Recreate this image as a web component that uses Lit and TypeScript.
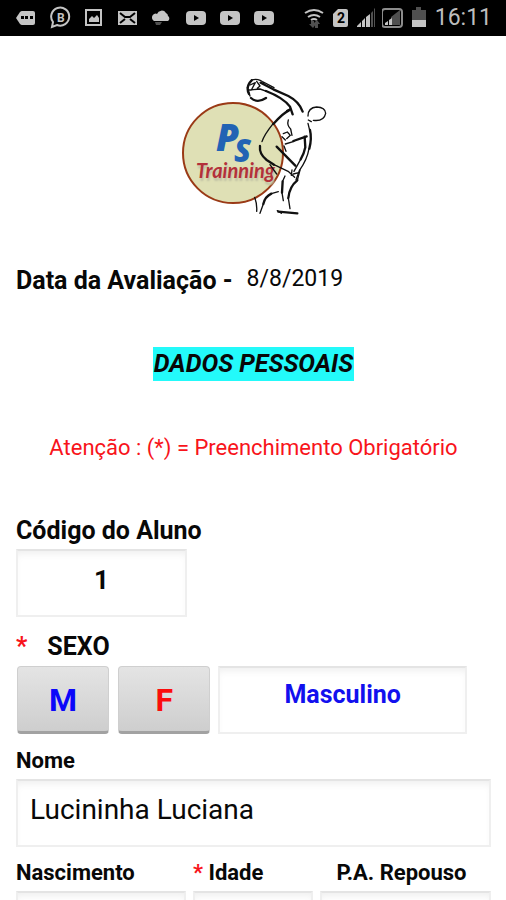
import { LitElement, html, css, svg } from "lit";
import { customElement, state } from "lit/decorators.js";

@customElement("status-bar")
class StatusBar extends LitElement {
  static styles = css`
    :host {
      display: flex;
      flex: none;
      align-items: center;
      justify-content: space-between;
      height: 36px;
      padding: 0 14px 0 16px;
      background: #000;
      color: #bdbdbd;
      font: 23px/36px Roboto, sans-serif;
    }
    .group {
      display: flex;
      align-items: center;
      gap: 12px;
    }
    .tight {
      gap: 4px;
    }
    svg {
      display: block;
      width: 22px;
      height: 24px;
      fill: #c4c4c4;
    }
    .clock {
      margin-left: 1px;
      line-height: 38px;
    }
    .line {
      fill: none;
      stroke: #c4c4c4;
      stroke-width: 2;
    }
    .frame {
      fill: none;
      stroke: #8c8c8c;
      stroke-width: 2;
    }
    .dark {
      fill: #000;
    }
    .cut {
      fill: none;
      stroke: #000;
      stroke-width: 2;
    }
    .dim {
      fill: #505050;
    }
    .num {
      font: bold 14px Roboto, sans-serif;
    }
    .small {
      font: bold 12px Roboto, sans-serif;
    }
  `;

  private icon(body: unknown) {
    return html`<svg viewBox="0 0 22 24" aria-hidden="true">${body}</svg>`;
  }

  render() {
    const video = svg`<rect x="0" y="5" width="20" height="14" rx="4"/><path class="dark" d="M8 9l5 3-5 3z"/>`;
    return html`
      <div class="group">
        ${this.icon(svg`<path d="M0 12l4-6q1-1 2-1h11q2 0 2 2v10q0 2-2 2H6q-1 0-2-1z"/><path class="dark" d="M5 10h3v3H5zM9 10h3v3H9zM14 10h3v3h-3z"/>`)}
        ${this.icon(svg`<path class="line" d="M2 21l1-5a9 9 0 1 1 4 3z"/><text class="small" x="7" y="16">B</text>`)}
        ${this.icon(svg`<rect class="line" x="2" y="4" width="15" height="15"/><path d="M5 16v-3l3-3 2 2 3-3 2 3v4z"/>`)}
        ${this.icon(svg`<rect x="0" y="5" width="19" height="14"/><path class="cut" d="M2 7l5 4h5l5-4M2 17l5-4M17 17l-5-4"/>`)}
        ${this.icon(svg`<path d="M2 15a4 4 0 0 1 0-7q2-1 3 0a5 5 0 0 1 9-1q2 1 2 3a3 3 0 0 1 0 5z"/><path class="dim" d="M3 16h7l-2 3H4z"/>`)}
        ${this.icon(video)} ${this.icon(video)} ${this.icon(video)}
      </div>
      <div class="group tight">
        ${this.icon(svg`<path class="line" d="M1 7q9-6 18 0M4 11q6-4 12 0M7 14q3-2 6 0"/><path class="dim" d="M7 15h3v3h2l-3 4-4-4h2zM14 22h-3v-4h-2l4-4 3 4h-2z"/>`)}
        ${this.icon(svg`<path d="M8 3h8q2 0 2 2v14q0 2-2 2H5q-2 0-2-2V8z"/><text class="num dark" x="7" y="17">2</text>`)}
        ${this.icon(svg`<path d="M1 21v-1l4-4v5zM6 21v-6l3-3v9zM10 21V11l4-3v13z"/><path class="dim" d="M15 21V7l2-2v16zM18 3v18h1V2z"/>`)}
        ${this.icon(svg`<rect class="frame" x="0" y="3" width="20" height="18" rx="3"/><path class="dim" d="M9 19v-8l9-7v15z"/><path d="M3 19v-2l3-2v4zM7 19v-5l3-2v7z"/>`)}
        ${this.icon(svg`<path class="dim" d="M4 4h4V1h5v3h5v11H4z"/><path d="M4 14h14v7H4z"/>`)}
        <span class="clock">16:11</span>
      </div>
    `;
  }
}

@customElement("app-logo")
class AppLogo extends LitElement {
  static styles = css`
    :host {
      display: block;
    }
    svg {
      display: block;
      width: 170px;
      height: 155px;
      margin: 0 auto;
    }
    .disc {
      fill: #dfe0b5;
      stroke: #9a3a16;
      stroke-width: 2;
    }
    .thin,
    .thick {
      fill: none;
      stroke: #111;
      stroke-linecap: round;
      stroke-linejoin: round;
    }
    .thin {
      stroke-width: 4;
    }
    .thick {
      stroke-width: 7;
    }
    .p {
      font: italic 800 37px "Open Sans", sans-serif;
      fill: #2263b4;
    }
    .s {
      font: italic 800 31px "Open Sans", sans-serif;
      fill: #2263b4;
    }
    .name {
      font: italic bold 20px Lato, sans-serif;
      fill: #b3303a;
      text-shadow: 1px 3px 2px #c0c0a4;
    }
  `;

  render() {
    return html`
      <svg viewBox="0 0 170 155" role="img" aria-label="PS Trainning">
        <circle class="disc" cx="64" cy="83" r="50" />
        <text class="p" x="47" y="81">P</text>
        <text class="s" x="65" y="92">S</text>
        <text class="name" x="27" y="108">Trainning</text>
        <g transform="translate(1 0) scale(0.3333)">
          <path class="thick" d="M245 31Q226 50 237 72M243 84Q262 101 288 84M272 38L310 58 355 78Q388 95 398 125M288 63Q340 83 360 110L368 133M357 121Q338 130 310 162" />
          <path class="thin" d="M245 30Q268 24 282 40M237 60L270 57 290 64M240 45L256 38 244 60M260 34L270 48 262 55M232 52L240 78M310 160Q282 195 276 215M280 36L312 53M350 122L362 116" />
          <path class="thin" d="M414 138Q414 113 440 111 466 112 467 130 462 155 430 151M415 150L424 155M355 150Q350 166 362 177L366 196M340 191L352 186 361 196 350 206M336 200L346 210M346 222L372 214" />
          <path class="thick" d="M370 213L410 199M320 230L376 287M270 228Q267 252 290 270L312 284M420 180Q426 205 418 236M404 200L406 232Q402 252 392 268" />
          <path class="thin" d="M414 160L420 185M417 236Q412 268 388 302L378 330M392 268L372 304M312 284L356 305 374 322M300 284L320 312M342 228L348 244M366 300L364 316M386 308L370 312" />
          <path class="thick" d="M338 334L336 368M382 331Q358 350 355 384M304 371Q285 380 280 402M325 425L382 430" />
          <path class="thin" d="M345 318L338 334M336 368L340 392M390 300L382 331M355 384L360 416M325 365L304 371M280 402L270 430M254 382Q262 404 260 424M322 422L334 430" />
        </g>
      </svg>
    `;
  }
}

@customElement("app-root")
class AppRoot extends LitElement {
  static styles = css`
    :host {
      display: flex;
      flex-direction: column;
      height: 100vh;
      background: #fff;
      color: #080808;
      font: 25px/32px Roboto, sans-serif;
    }
    * {
      box-sizing: border-box;
    }
    main {
      flex: 1;
      min-height: 0;
      overflow: auto;
      scrollbar-width: none;
      padding: 34px 15px 16px 16px;
    }
    .date {
      display: flex;
      align-items: flex-start;
      gap: 14px;
      margin: 40px 0 0;
    }
    .strong {
      font-weight: bold;
    }
    .date time {
      font-size: 23px;
      line-height: 28px;
    }
    .title {
      width: fit-content;
      margin: 50px auto 0;
      padding: 0 1px;
      background: #23fafa;
      font: italic bold 25px/34px Roboto, sans-serif;
    }
    .notice {
      margin: 51px 0 0;
      color: #f8141b;
      font-size: 22px;
      text-align: center;
    }
    .code {
      width: 36%;
      margin-top: 51px;
    }
    label {
      display: block;
      font-weight: bold;
      white-space: nowrap;
    }
    .code label {
      padding-bottom: 2px;
    }
    .mark {
      color: #f8141b;
    }
    input {
      display: block;
      width: 100%;
      height: 68px;
      margin: 0;
      padding: 0 12px 8px;
      border: 2px solid #efefef;
      border-top-color: #e4e4e4;
      border-radius: 0;
      outline: none;
      background: #fff;
      box-shadow: inset 0 6px 8px -4px #ececec;
      color: #080808;
      font: 28px Roboto, sans-serif;
    }
    .center {
      padding-bottom: 6px;
      text-align: center;
      font-size: 26px;
      font-weight: bold;
    }
    .value {
      padding-bottom: 12px;
      color: #1210ee;
      font-size: 25px;
    }
    .sex-label {
      display: flex;
      gap: 20px;
      margin-top: 14px;
      padding-bottom: 3px;
    }
    .sex {
      display: grid;
      grid-template-columns: 94fr 94fr 248fr 17fr;
      gap: 7px;
    }
    button {
      height: 68px;
      margin: 0 1px;
      padding: 2px 0 0;
      border: 1px solid #cfcfcf;
      border-bottom: 3px solid #a2a2a2;
      border-radius: 4px;
      background: linear-gradient(#e4e4e4, #cecece);
      font: bold 32px Roboto, sans-serif;
    }
    .m {
      color: #0b07fa;
    }
    .f {
      color: #fb0d0d;
    }
    .name {
      margin-top: 11px;
    }
    .small {
      font-size: 22px;
      padding-bottom: 2px;
    }
    .trio {
      display: grid;
      grid-template-columns: 170fr 120fr 171fr;
      gap: 7px;
      margin-top: 10px;
    }
    .mid {
      padding-right: 8px;
      text-align: center;
    }
  `;

  @state() private sex = "Masculino";

  render() {
    return html`
      <status-bar></status-bar>
      <main>
        <app-logo></app-logo>
        <p class="date"><span class="strong">Data da Avaliação -</span><time datetime="2019-08-08">8/8/2019</time></p>
        <h1 class="title">DADOS PESSOAIS</h1>
        <p class="notice">Atenção : (*) = Preenchimento Obrigatório</p>
        <div class="code">
          <label for="code">Código do Aluno</label>
          <input id="code" class="center" value="1" />
        </div>
        <label class="sex-label" for="sex"><span class="mark">*</span>SEXO</label>
        <div class="sex">
          <button class="m" type="button" @click=${() => (this.sex = "Masculino")}>M</button>
          <button class="f" type="button" @click=${() => (this.sex = "Feminino")}>F</button>
          <input id="sex" class="center value" readonly .value=${this.sex} />
        </div>
        <div class="name">
          <label class="small" for="name">Nome</label>
          <input id="name" value="Lucininha Luciana" />
        </div>
        <div class="trio">
          <div>
            <label class="small" for="birth">Nascimento</label>
            <input id="birth" />
          </div>
          <div>
            <label class="small" for="age"><span class="mark">*</span> Idade</label>
            <input id="age" />
          </div>
          <div>
            <label class="small mid" for="pressure">P.A. Repouso</label>
            <input id="pressure" />
          </div>
        </div>
      </main>
    `;
  }
}
